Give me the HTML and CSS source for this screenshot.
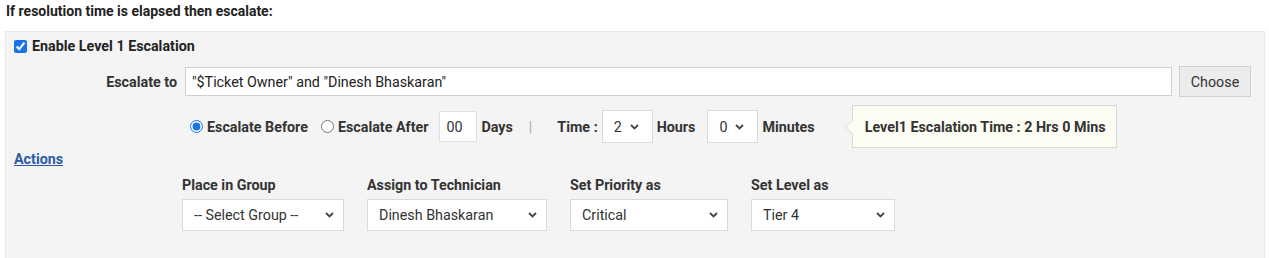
FILE: index.html
```html
<!DOCTYPE html>
<html lang="en">
<head>
    <meta charset="UTF-8">
    <meta name="viewport" content="width=device-width, initial-scale=1.0">
    <title>Escalation</title>
    <link rel="stylesheet" href="styles.css">
</head>
<body>
    <div class="title">If resolution time is elapsed then escalate:</div>
    <div class="panel">
        <label class="enable-row">
            <input type="checkbox" class="check" checked>
            <span>Enable Level 1 Escalation</span>
        </label>

        <div class="escalate-row">
            <span class="field-label">Escalate to</span>
            <input type="text" class="text-input" value='"$Ticket Owner" and "Dinesh Bhaskaran"'>
            <button class="choose-btn">Choose</button>
        </div>

        <div class="time-row">
            <label class="radio-label"><input type="radio" name="when" class="radio" checked>Escalate Before</label>
            <label class="radio-label"><input type="radio" name="when" class="radio">Escalate After</label>
            <input type="text" class="days-input" value="00">
            <span class="bold">Days</span>
            <span class="sep">|</span>
            <span class="bold">Time :</span>
            <div class="select-wrap small">
                <select class="select"><option>2</option></select>
                <svg class="chevron" width="9" height="6" viewBox="0 0 9 6"><path d="M1 1l3.5 3.5L8 1" fill="none" stroke="#444" stroke-width="1.8"/></svg>
            </div>
            <span class="bold">Hours</span>
            <div class="select-wrap small minutes">
                <select class="select"><option>0</option></select>
                <svg class="chevron" width="9" height="6" viewBox="0 0 9 6"><path d="M1 1l3.5 3.5L8 1" fill="none" stroke="#444" stroke-width="1.8"/></svg>
            </div>
            <span class="bold">Minutes</span>
            <div class="tooltip">Level1 Escalation Time : 2 Hrs 0 Mins</div>
        </div>

        <a href="#" class="actions-link">Actions</a>

        <div class="actions-row">
            <div class="action">
                <span class="bold">Place in Group</span>
                <div class="select-wrap group">
                    <select class="select"><option>-- Select Group --</option></select>
                    <svg class="chevron" width="9" height="6" viewBox="0 0 9 6"><path d="M1 1l3.5 3.5L8 1" fill="none" stroke="#444" stroke-width="1.8"/></svg>
                </div>
            </div>
            <div class="action">
                <span class="bold">Assign to Technician</span>
                <div class="select-wrap tech">
                    <select class="select"><option>Dinesh Bhaskaran</option></select>
                    <svg class="chevron" width="9" height="6" viewBox="0 0 9 6"><path d="M1 1l3.5 3.5L8 1" fill="none" stroke="#444" stroke-width="1.8"/></svg>
                </div>
            </div>
            <div class="action">
                <span class="bold">Set Priority as</span>
                <div class="select-wrap priority">
                    <select class="select"><option>Critical</option></select>
                    <svg class="chevron" width="9" height="6" viewBox="0 0 9 6"><path d="M1 1l3.5 3.5L8 1" fill="none" stroke="#444" stroke-width="1.8"/></svg>
                </div>
            </div>
            <div class="action">
                <span class="bold">Set Level as</span>
                <div class="select-wrap level">
                    <select class="select"><option>Tier 4</option></select>
                    <svg class="chevron" width="9" height="6" viewBox="0 0 9 6"><path d="M1 1l3.5 3.5L8 1" fill="none" stroke="#444" stroke-width="1.8"/></svg>
                </div>
            </div>
        </div>
    </div>
</body>
</html>
```

FILE: styles.css
```css
body {
    margin: 0;
    font-family: Roboto, "Liberation Sans", Arial, sans-serif;
    font-size: 14.3px;
    color: #333;
    background: #fff;
}

.bold {
    font-weight: bold;
}

.title {
    font-size: 14px;
    font-weight: bold;
    color: #222;
    padding: 3px 0 0 6px;
    height: 28px;
}

.panel {
    margin: 0 4px 0 5px;
    background: #f4f4f4;
    border: 1px solid #e6e6e6;
    padding: 7px 13px 30px 8px;
}

.enable-row {
    display: flex;
    align-items: center;
    gap: 5px;
    font-weight: bold;
    color: #222;
    height: 14px;
}

.check {
    margin: 0;
    width: 13px;
    height: 13px;
    accent-color: #1a73e8;
}

.escalate-row {
    display: flex;
    align-items: center;
    margin-top: 13px;
    height: 31px;
}

.field-label {
    flex-shrink: 0;
    width: 163px;
    text-align: right;
    font-weight: bold;
    margin-right: 8px;
}

.text-input {
    flex: 1;
    min-width: 0;
    height: 29px;
    box-sizing: border-box;
    border: 1px solid #cfcfcf;
    background: #fff;
    font: inherit;
    color: #222;
    padding: 0 6px;
}

.choose-btn {
    flex-shrink: 0;
    margin-left: 7px;
    width: 72px;
    height: 31px;
    background: #ececec;
    border: 1px solid #d0d0d0;
    font: inherit;
    color: #333;
    padding: 0;
}

.time-row {
    display: flex;
    align-items: center;
    margin-top: 8px;
    height: 43px;
    padding-left: 176px;
}

.radio-label {
    display: flex;
    align-items: center;
    gap: 4px;
    font-weight: bold;
    margin-right: 13px;
}

.radio {
    margin: 0;
    width: 13px;
    height: 13px;
    accent-color: #1a73e8;
}

.days-input {
    width: 38px;
    height: 31px;
    box-sizing: border-box;
    border: 1px solid #e0e0e0;
    background: #fff;
    font: inherit;
    color: #333;
    padding: 0 6px;
    margin-left: -2px;
    margin-right: 4px;
}

.sep {
    color: #aaa;
    margin: 0 25px 0 16px;
}

.select-wrap {
    position: relative;
    height: 32px;
}

.select {
    appearance: none;
    -webkit-appearance: none;
    width: 100%;
    height: 100%;
    box-sizing: border-box;
    border: 1px solid #dadada;
    background: #fff;
    font: inherit;
    color: #333;
    padding: 0 11px;
    border-radius: 0;
}

.chevron {
    position: absolute;
    right: 10px;
    top: 13px;
    pointer-events: none;
}

.select-wrap.small {
    width: 51px;
    height: 33px;
    margin: 0 4px;
}

.select-wrap.small .chevron {
    right: 14px;
    top: 14px;
}

.select-wrap.minutes {
    margin-left: 12px;
}

.tooltip {
    position: relative;
    flex-shrink: 0;
    white-space: nowrap;
    margin-left: 37px;
    height: 43px;
    box-sizing: border-box;
    display: flex;
    align-items: center;
    padding: 0 12px;
    width: 265px;
    background: #fdfdf4;
    border: 1px solid #d8d8d8;
    font-weight: bold;
}

.tooltip::before {
    content: "";
    position: absolute;
    left: -8px;
    top: 13px;
    border-style: solid;
    border-width: 8px 8px 8px 0;
    border-color: transparent #d8d8d8 transparent transparent;
}

.tooltip::after {
    content: "";
    position: absolute;
    left: -7px;
    top: 13px;
    border-style: solid;
    border-width: 8px 8px 8px 0;
    border-color: transparent #fdfdf4 transparent transparent;
}

.actions-link {
    display: block;
    width: max-content;
    margin-top: 1px;
    line-height: 20px;
    font-weight: bold;
    color: #2a5aa8;
    text-decoration: underline;
}

.actions-row {
    display: flex;
    gap: 23px;
    margin-top: 8px;
    padding-left: 168px;
}

.action {
    display: flex;
    flex-direction: column;
    gap: 6px;
}

.select-wrap.group { width: 162px; }
.select-wrap.tech { width: 180px; }
.select-wrap.priority { width: 158px; }
.select-wrap.level { width: 144px; }
```
